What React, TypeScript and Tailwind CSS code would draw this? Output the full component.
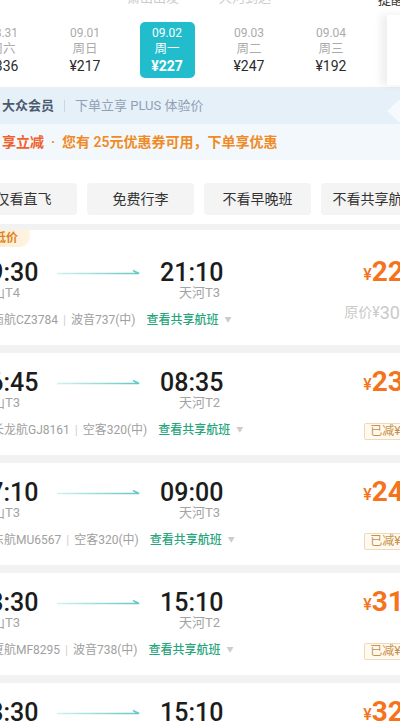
import React from "react";

const days = [
  { d: "08.31", w: "周六", p: "¥336" },
  { d: "09.01", w: "周日", p: "¥217" },
  { d: "09.02", w: "周一", p: "¥227", on: true },
  { d: "09.03", w: "周二", p: "¥247" },
  { d: "09.04", w: "周三", p: "¥192" },
];

const chips = ["仅看直飞", "免费行李", "不看早晚班", "不看共享航班"];

type Flight = {
  tag?: string;
  dep: string;
  arr: string;
  depAp: string;
  arrAp: string;
  no: string;
  plane: string;
  price: string;
  orig?: string;
  cut?: string;
};

const flights: Flight[] = [
  { tag: "当日低价", dep: "19:30", arr: "21:10", depAp: "萧山T4", arrAp: "天河T3", no: "南航CZ3784", plane: "波音737(中)", price: "227", orig: "306" },
  { dep: "06:45", arr: "08:35", depAp: "萧山T3", arrAp: "天河T2", no: "长龙航GJ8161", plane: "空客320(中)", price: "237", cut: "已减¥10" },
  { dep: "07:10", arr: "09:00", depAp: "萧山T3", arrAp: "天河T3", no: "东航MU6567", plane: "空客320(中)", price: "247", cut: "已减¥10" },
  { dep: "13:30", arr: "15:10", depAp: "萧山T3", arrAp: "天河T2", no: "厦航MF8295", plane: "波音738(中)", price: "317", cut: "已减¥10" },
  { dep: "13:30", arr: "15:10", depAp: "萧山T3", arrAp: "天河T2", no: "厦航MF8297", plane: "波音738(中)", price: "327", cut: "已减¥10" },
];

const Arrow = () => (
  <svg width="83" height="8" viewBox="0 0 83 8" className="shrink-0">
    <defs>
      <linearGradient id="ln" x1="0" x2="1" y1="0" y2="0">
        <stop offset="0" stopColor="#d3f0ef" />
        <stop offset="1" stopColor="#62c8c3" />
      </linearGradient>
    </defs>
    <path d="M0 5.5 H82 L76 2.5" fill="none" stroke="url(#ln)" strokeWidth="1.6" />
  </svg>
);

const Card = ({ f }: { f: Flight }) => (
  <div className="bg-white">
    {f.tag && (
      <div className="h-[17px] w-[72px] rounded-br-[10px] bg-gradient-to-r from-[#fde3b8] to-[#fff4e2] pl-[12px] text-[12px] font-bold leading-[17px] text-[#dd8526]">
        {f.tag}
      </div>
    )}
    <div className={`flex pr-[18px] pb-[18px] ${f.tag ? "pt-[11px]" : "pt-[15px]"}`}>
      <div className="flex-1 pl-[17px]">
        <div className="flex h-[28px] items-center text-[25px] font-medium leading-none text-[#1c1c1c]">
          <div className="w-[82px] shrink-0">{f.dep}</div>
          <Arrow />
          <div className="w-[20px] shrink-0" />
          <div className="w-[62px] shrink-0 text-right">{f.arr}</div>
        </div>
        <div className="flex h-[14px] text-[13px] leading-[14px] text-[#a3a3a3]">
          <div className="w-[82px] shrink-0 pl-[4px]">{f.depAp}</div>
          <div className="w-[101px] shrink-0" />
          <div className="w-[62px] shrink-0 text-right">{f.arrAp}</div>
        </div>
        <div className="mt-[13px] flex h-[14px] items-center pl-[17px] text-[12px] leading-[14px] text-[#a0a0a0]">
          <span>{f.no}</span>
          <span className="mx-[5px] text-[#cfcfcf]">|</span>
          <span>{f.plane}</span>
          <span className="ml-[11px] font-medium text-[#27a67c]">查看共享航班</span>
          <span className="ml-[6px] text-[7px] text-[#cccccc]">▼</span>
        </div>
      </div>
      <div className="flex h-[69px] flex-col items-end">
        <div className="flex h-[28px] items-center text-[#f5731c]">
          <span className="mt-[5px] text-[16px] font-medium">¥</span>
          <span className="text-[28px] font-bold leading-none">{f.price}</span>
        </div>
        {f.orig && (
          <div className="mr-[10px] mt-[17px] flex h-[18px] items-center text-[#cacaca]">
            <span className="text-[14px]">原价</span>
            <span className="text-[14px]">¥</span>
            <span className="text-[18px]">{f.orig}</span>
          </div>
        )}
        {f.cut && (
          <div className="mt-[27px] h-[17px] rounded-[2px] border border-[#f0d9b6] bg-[#fffaf1] px-[5px] text-[12px] leading-[15px] text-[#c98f45]">
            {f.cut}
          </div>
        )}
      </div>
    </div>
  </div>
);

export default function App() {
  return (
    <div className="h-[724px] w-[400px] overflow-hidden bg-[#f2f2f2] font-['Roboto','Noto_Sans_CJK_SC',sans-serif]">
      <div className="-ml-[42px] w-[480px]">
        {/* header with date tabs */}
        <div className="h-[88px] border-b border-[#eeeeee] bg-white">
          <div className="flex h-[22px] text-[13px] leading-[16px]">
            <span className="-mt-[10px] ml-[169px] text-[#cccccc]">萧山出发</span>
            <span className="-mt-[10px] ml-[40px] text-[#cccccc]">天河到达</span>
            <span className="-mt-[8px] ml-[107px] text-[#333333]">提醒</span>
          </div>
          <div className="flex h-[56px] items-center pl-[4px]">
            {days.map((d) => (
              <div key={d.d} className="flex h-full w-[82px] shrink-0 justify-center">
                <div
                  className={`flex h-full w-[55px] flex-col items-center justify-center rounded-[5px] ${
                    d.on ? "bg-[#22bdcd] text-white" : ""
                  }`}
                >
                  <div className={`text-[12px] leading-[16px] ${d.on ? "" : "text-[#ababab]"}`}>{d.d}</div>
                  <div className={`text-[12.5px] leading-[16px] ${d.on ? "" : "text-[#ababab]"}`}>{d.w}</div>
                  <div className={`text-[14px] leading-[18px] ${d.on ? "font-bold" : "text-[#2b2b2b]"}`}>{d.p}</div>
                </div>
              </div>
            ))}
            <div className="ml-[15px] h-[70px] w-[40px] shrink-0 bg-white shadow-[-6px_0_8px_rgba(0,0,0,0.07)]" />
          </div>
        </div>

        {/* member banner */}
        <div className="bg-[#e6f0f9]">
          <div className="flex h-[36px] items-center pl-[44px] text-[13px]">
            <span className="font-semibold text-[#4b5b6e]">大众会员</span>
            <span className="ml-[10px] h-[12px] w-px bg-[#c9d5e2]" />
            <span className="ml-[10px] text-[#8fa1b5]">下单立享 PLUS 体验价</span>
            <svg width="26" height="24" viewBox="0 0 26 24" className="ml-auto mr-[26px] mt-[10px]">
              <path d="M13 1 L25 12 L13 23 L1 12 Z" fill="#f7fbff" opacity="0.9" />
            </svg>
          </div>
          <div className="flex h-[36px] items-center bg-[#f3f8fc] pl-[44px] text-[14px] font-semibold">
            <span className="text-[#f0602a]">享立减</span>
            <span className="mx-[7px] text-[#f08a24]">·</span>
            <span className="text-[#f08a24]">您有 25元优惠券可用，下单享优惠</span>
          </div>
        </div>

        {/* filter chips */}
        <div className="flex gap-[10px] bg-white pb-[9px] pl-[12px] pt-[23px]">
          {chips.map((c) => (
            <div
              key={c}
              className="flex h-[32px] w-[107px] shrink-0 items-center justify-center rounded-[4px] bg-[#f4f4f4] text-[14px] text-[#333333]"
            >
              {c}
            </div>
          ))}
        </div>

        {/* flight list */}
        <div className="mt-[6px] flex flex-col gap-[8px]">
          {flights.map((f, i) => (
            <Card key={i} f={f} />
          ))}
        </div>
      </div>
    </div>
  );
}
